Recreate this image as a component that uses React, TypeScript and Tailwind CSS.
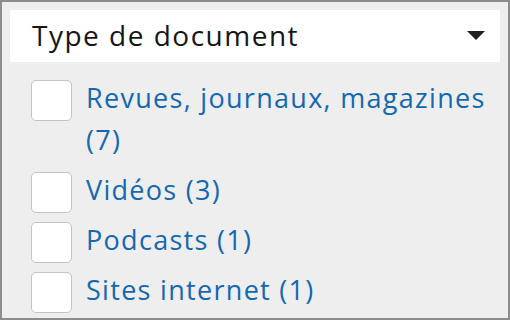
import { useState } from 'react'

const types = [
  { id: 'revues', label: 'Revues, journaux, magazines (7)' },
  { id: 'videos', label: 'Vidéos (3)' },
  { id: 'podcasts', label: 'Podcasts (1)' },
  { id: 'sites', label: 'Sites internet (1)' },
]

export default function App() {
  const [checked, setChecked] = useState<Record<string, boolean>>({})

  return (
    <div
      className="w-[510px] h-[320px] bg-[#eeeeee] border-2 border-[#8c8c8c] p-2 overflow-hidden"
      style={{ fontFamily: '"Open Sans", "Noto Sans", sans-serif' }}
    >
      {/* Header */}
      <div className="h-[52px] bg-white flex items-center justify-between pl-[22px] pr-[15px]">
        <span className="text-[28px] tracking-[1.5px] text-[#161616] leading-none mt-[-2px]">Type de document</span>
        <svg width="18" height="9" viewBox="0 0 18 9" className="mt-[-2px]">
          <path d="M0 0h18L9 9z" fill="#1e1e1e" />
        </svg>
      </div>

      {/* Options */}
      <div className="mt-[18px] pl-[21px] flex flex-col gap-[8px]">
        {types.map((t) => (
          <label key={t.id} className="flex items-start gap-[14px] cursor-pointer">
            <input
              type="checkbox"
              className="sr-only"
              checked={!!checked[t.id]}
              onChange={() => setChecked({ ...checked, [t.id]: !checked[t.id] })}
            />
            <span className="w-[41px] h-[41px] shrink-0 bg-white border border-[#c4c4c4] rounded-[5px]"></span>
            <span className="flex-1 text-[27px] tracking-[1.3px] leading-[42px] text-[#1468b0] mt-[-3px] pb-[3px]">
              {t.label}
            </span>
          </label>
        ))}
      </div>
    </div>
  )
}
